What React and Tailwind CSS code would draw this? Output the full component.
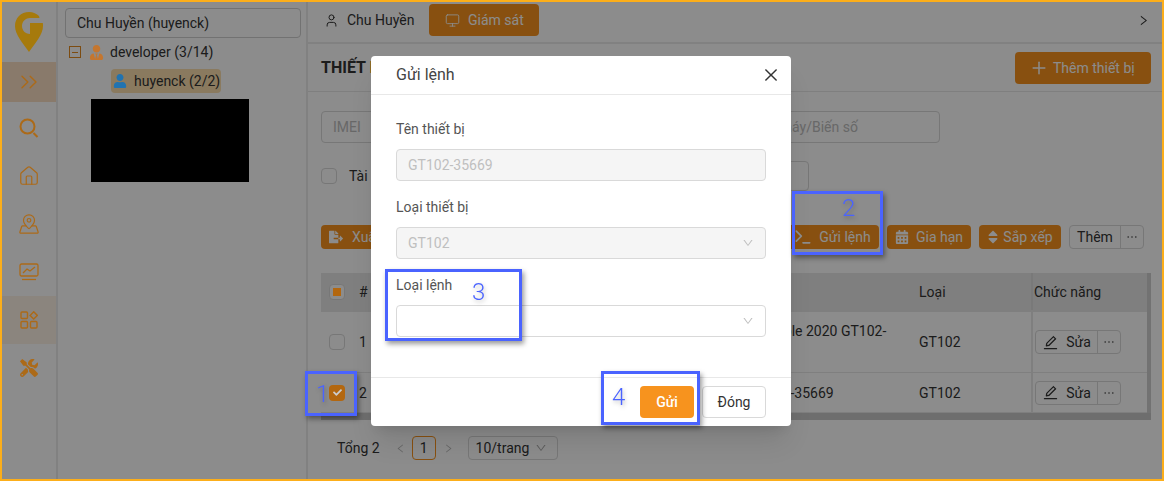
import { ChevronsRight, House, MapPinned, Monitor, Plus, Terminal, User } from "lucide-react";
import { AiOutlineClose, AiOutlineDown, AiOutlineEdit, AiOutlineEllipsis, AiOutlineLeft, AiOutlineRight } from "react-icons/ai";
import { FaCalendarAlt, FaCheck, FaFileExport, FaSort, FaTools, FaUser, FaUserTie } from "react-icons/fa";

function Logo() {
    return (
        <svg width="28" height="40" viewBox="0 0 28 40" className="relative z-20">
            <path d="M14 0C6 0 0 6 0 14c0 9 8 17 14 26 6-9 14-17 14-26 0-1 0-2-.2-3H15v11c-4 0-8-3-8-8s4-8 8-8h9.5L24 4C22 2 18 0 14 0z" fill="#a67a0c" />
        </svg>
    );
}

function SearchIcon() {
    return (
        <svg width="20" height="20" viewBox="0 0 20 20" fill="none" stroke="currentColor">
            <circle cx="8.5" cy="8.5" r="7" strokeWidth="2" />
            <path d="M14.5 15l4 4" strokeWidth="2" />
        </svg>
    );
}

function ChartIcon() {
    return (
        <svg width="20" height="18" viewBox="0 0 20 18" fill="none" stroke="currentColor" strokeWidth="1.3">
            <rect x="1" y="1" width="18" height="12" rx="1.5" />
            <path d="M4 10l4-4 3 2 5-4" />
            <path d="M3 16.5h14" />
        </svg>
    );
}

function AppsIcon() {
    return (
        <svg width="18" height="18" viewBox="0 0 18 18" fill="none" stroke="currentColor" strokeWidth="1.4">
            <rect x="1" y="1" width="6.5" height="6.5" rx="1" />
            <rect x="1" y="10.5" width="6.5" height="6.5" rx="1" />
            <rect x="10.5" y="10.5" width="6.5" height="6.5" rx="1" />
            <path d="M13.7.8l3.6 3.6-3.6 3.6-3.6-3.6z" />
        </svg>
    );
}

function SideItem({ children, className = "" }) {
    return (
        <div className={`h-12 flex items-center justify-center ${className}`}>
            <span className="relative z-20 text-[#ac6a18]">{children}</span>
        </div>
    );
}

function Sidebar() {
    return (
        <aside className="w-[56px] shrink-0 flex flex-col border-r-2 border-[#ececec]">
            <div className="h-[60px] flex items-start justify-center pt-[10px]">
                <Logo />
            </div>
            <SideItem className="bg-[#f9dfc4] !h-[40px]"><ChevronsRight size={28} strokeWidth={1.2} /></SideItem>
            <SideItem className="mt-[2px]"><SearchIcon /></SideItem>
            <SideItem><House size={22} strokeWidth={1.3} /></SideItem>
            <SideItem><MapPinned size={22} strokeWidth={1.3} /></SideItem>
            <SideItem><ChartIcon /></SideItem>
            <SideItem className="bg-[#fdf3e6]"><AppsIcon /></SideItem>
            <SideItem><FaTools size={18} /></SideItem>
        </aside>
    );
}

function TreePanel() {
    return (
        <section className="w-[250px] shrink-0 border-r-2 border-[#ececec] pl-[6px] pt-[6px] text-sm text-[#333]">
            <div className="h-[30px] w-[236px] ml-[1px] border border-[#cfcfcf] rounded-sm pl-[11px] flex items-center">Chu Huyền (huyenck)</div>
            <div className="flex items-center h-[24px] mt-[2px] ml-[5px]">
                <span className="w-[12px] h-[12px] shrink-0 border border-[#e48a1f] flex items-center justify-center mr-[8px]">
                    <span className="w-[6px] h-px bg-[#e48a1f]" />
                </span>
                <FaUserTie size={15} className="relative z-20 text-[#c4762f] mr-[6px]" />
                <span>developer (3/14)</span>
            </div>
            <div className="mt-[5px] ml-[47px] w-[110px] h-[24px] rounded-sm bg-[#fbdfae] flex items-center pl-[2px]">
                <FaUser size={14} className="relative z-20 text-[#2173b0] mr-[7px]" />
                <span>huyenck (2/2)</span>
            </div>
            <div className="mt-[6px] ml-[27px] w-[158px] h-[83px] bg-black" />
        </section>
    );
}

function OrangeBtn({ icon, label, className = "" }) {
    return (
        <div className={`h-[24px] bg-[#f7931e] rounded-sm text-white flex items-center justify-center text-sm ${className}`}>
            {icon}
            <span>{label}</span>
        </div>
    );
}

function RowActions() {
    return (
        <div className="flex h-[24px] w-[86px] border border-[#d9d9d9] rounded-sm text-sm bg-white">
            <div className="w-[62px] border-r border-[#d9d9d9] flex items-center justify-center gap-[7px]">
                <AiOutlineEdit size={17} />
                <span>Sửa</span>
            </div>
            <div className="flex-1 flex items-center justify-center"><AiOutlineEllipsis size={14} /></div>
        </div>
    );
}

function TableRow({ num, name, checked, height }) {
    return (
        <div className={`flex border-b border-[#e8e8e8] text-sm text-[#333] ${height}`}>
            <div className="w-[31px] flex items-center pl-[8px]">
                {checked ? (
                    <span className="relative z-20 w-[16px] h-[16px] rounded-sm bg-[#b3670f] text-[#ccc] flex items-center justify-center"><FaCheck size={9} /></span>
                ) : (
                    <span className="w-[16px] h-[16px] rounded-sm border border-[#d9d9d9] bg-white" />
                )}
            </div>
            <div className="w-[8px] pl-[7px] flex items-center">{num}</div>
            <div className="w-[389px]" />
            <div className="w-[170px] flex items-center">
                <span className="w-[145px] leading-[22px]">{name}</span>
            </div>
            <div className="w-[112px] flex items-center">GT102</div>
            <div className="flex-1 flex items-center pl-[2px] border-l-2 border-[#e8e8e8]">
                <RowActions />
            </div>
        </div>
    );
}

function MainPanel() {
    return (
        <main className="flex-1 min-w-0 flex flex-col text-[#333]">
            <div className="h-[42px] border-b-2 border-[#ececec] flex items-center pl-[16px] pb-[5px] pt-[1px] text-sm">
                <User size={15} strokeWidth={1.6} className="mr-[8px]" />
                <span>Chu Huyền</span>
                <div className="ml-[15px] w-[110px] h-[32px] bg-[#f7931e] rounded-sm text-white flex items-center justify-center gap-[8px]">
                    <Monitor size={15} strokeWidth={1.4} />
                    <span>Giám sát</span>
                </div>
                <AiOutlineRight size={13} className="ml-auto mr-[12px]" />
            </div>
            <div className="h-[48px] border-b border-[#e8e8e8] flex items-center justify-between pl-[13px] pr-[11px]">
                <span className="font-bold text-base">THIẾT <span className="text-[#f7931e]">BỊ</span></span>
                <div className="w-[136px] h-[32px] bg-[#f7931e] rounded-sm text-white text-sm flex items-center pl-[14px] gap-[4px]">
                    <Plus size={20} strokeWidth={1.8} />
                    <span>Thêm thiết bị</span>
                </div>
            </div>
            <div className="pl-[13px] pr-[11px] pt-[19px]">
                <div className="flex gap-[9px]">
                    <div className="w-[300px] h-[32px] border border-[#d9d9d9] rounded-sm px-[11px] flex items-center text-sm text-[#bdbdbd]">IMEI</div>
                    <div className="w-[310px] h-[32px] border border-[#d9d9d9] rounded-sm pl-[129px] flex items-center text-sm text-[#bdbdbd]">Số máy/Biến số</div>
                </div>
                <div className="flex items-center h-[32px] mt-[17px]">
                    <span className="w-[16px] h-[16px] border border-[#d9d9d9] rounded-sm mr-[12px]" />
                    <span className="text-sm">Tài khoản</span>
                    <div className="ml-auto mr-[342px] w-[30px] h-[30px] border border-[#d9d9d9] rounded-sm" />
                </div>
                <div className="flex items-center gap-[8px] mt-[33px]">
                    <OrangeBtn className="w-[90px] !justify-start pl-[8px] gap-[9px]" icon={<FaFileExport size={14} />} label="Xuất" />
                    <div className="flex-1" />
                    <OrangeBtn className="w-[94px] gap-[6px]" icon={<Terminal size={20} strokeWidth={2} />} label="Gửi lệnh" />
                    <OrangeBtn className="w-[84px] gap-[7px]" icon={<FaCalendarAlt size={14} />} label="Gia hạn" />
                    <OrangeBtn className="w-[82px] gap-[2px] pr-[2px]" icon={<FaSort size={16} />} label="Sắp xếp" />
                    <div className="flex h-[24px] w-[75px] border border-[#d9d9d9] rounded-sm text-sm mr-[7px]">
                        <div className="w-[51px] border-r border-[#d9d9d9] flex items-center justify-center">Thêm</div>
                        <div className="flex-1 flex items-center justify-center"><AiOutlineEllipsis size={14} /></div>
                    </div>
                </div>
                <div className="mt-[24px] relative">
                    <div className="flex h-[39px] bg-[#e8e8e8] text-sm items-center pb-[2px]">
                        <div className="w-[31px] pl-[8px]">
                            <span className="w-[16px] h-[16px] bg-white border border-[#d9d9d9] rounded-sm flex items-center justify-center">
                                <span className="relative z-20 w-[8px] h-[8px] bg-[#b3670f]" />
                            </span>
                        </div>
                        <div className="w-[8px] pl-[7px]">#</div>
                        <div className="w-[559px]" />
                        <div className="w-[112px]">Loại</div>
                        <div className="flex-1 h-full flex items-center pl-[1px] border-l-2 border-[#dcdcdc]">Chức năng</div>
                    </div>
                    <TableRow num="1" name="Example 2020 GT102-35669" height="h-[61px]" />
                    <TableRow num="2" name="GT102-35669" checked height="h-[40px]" />
                    <div className="h-[7px] bg-[#c8c8c8]" />
                    <div className="absolute right-0 top-0 bottom-[7px] w-[4px] bg-[#d0d0d0]" />
                </div>
                <div className="flex items-center text-sm h-[24px] mt-[16px] pl-[16px]">
                    <span>Tổng 2</span>
                    <AiOutlineLeft size={11} className="ml-[15px] text-[#bbb]" />
                    <span className="ml-[6px] w-[24px] h-[24px] border border-[#f7931e] rounded-sm flex items-center justify-center">1</span>
                    <AiOutlineRight size={11} className="ml-[7px] text-[#bbb]" />
                    <div className="ml-[14px] w-[90px] h-[24px] border border-[#d9d9d9] rounded-sm flex items-center pl-[7px] gap-[6px]">
                        <span>10/trang</span>
                        <AiOutlineDown size={12} className="text-[#aaa]" />
                    </div>
                </div>
            </div>
        </main>
    );
}

function Field({ label, value, disabled, select, className = "" }) {
    return (
        <div className={className}>
            <div className="text-sm text-[#555] h-[20px] leading-[20px]">{label}</div>
            <div className={`mt-[10px] h-[32px] border border-[#d9d9d9] rounded-sm flex items-center justify-between px-[11px] text-sm text-[#bfbfbf] ${disabled ? "bg-[#f5f5f5]" : "bg-white"}`}>
                <span>{value}</span>
                {select && <AiOutlineDown size={12} className="text-[#bfbfbf]" />}
            </div>
        </div>
    );
}

function Modal() {
    return (
        <div className="absolute left-[369px] top-[54px] w-[420px] h-[370px] bg-white rounded-sm shadow-xl z-30 flex flex-col text-[#333]">
            <div className="h-[39px] border-b border-[#e8e8e8] flex items-center justify-between pl-[25px] pr-[11px]">
                <span className="text-base text-[#444]">Gửi lệnh</span>
                <AiOutlineClose size={18} className="text-[#333]" />
            </div>
            <div className="flex-1 px-[25px] pt-[24px]">
                <Field label="Tên thiết bị" value="GT102-35669" disabled />
                <Field className="mt-[16px]" label="Loại thiết bị" value="GT102" disabled select />
                <Field className="mt-[16px]" label="Loại lệnh" select />
            </div>
            <div className="h-[49px] border-t border-[#e8e8e8] flex items-center justify-end gap-[8px] pr-[25px]">
                <div className="w-[54px] h-[32px] bg-[#f7931e] rounded-sm text-white text-sm font-medium flex items-center justify-center">Gửi</div>
                <div className="w-[64px] h-[32px] border border-[#d9d9d9] rounded-sm text-sm flex items-center justify-center">Đóng</div>
            </div>
        </div>
    );
}

// the numbered blue marks painted over the screenshot
const marks = [
    { n: "1", box: "left-[303px] top-[369px] w-[52px] h-[45px]", num: "left-[8px] top-[8px]" },
    { n: "2", box: "left-[790px] top-[189px] w-[91px] h-[64px]", num: "left-[47px] top-[2px]" },
    { n: "3", box: "left-[383px] top-[267px] w-[137px] h-[72px]", num: "left-[84px] top-[8px]" },
    { n: "4", box: "left-[599px] top-[369px] w-[99px] h-[54px]", num: "left-[8px] top-[11px]" },
];

export default function App() {
    return (
        <div className="relative w-[1164px] h-[481px] border-2 border-[#fcae1a] overflow-hidden bg-white flex font-['Roboto',sans-serif]">
            <Sidebar />
            <TreePanel />
            <MainPanel />
            <div className="absolute inset-0 bg-black/45 z-10" />
            <Modal />
            {marks.map((m) => (
                <div key={m.n} className={`absolute z-40 border-[3px] border-[#4a63ff] shadow-[2px_3px_5px_rgba(0,0,0,0.4)] ${m.box}`}>
                    <span className={`absolute text-2xl leading-none font-light text-[#4a63ff] drop-shadow-[1px_2px_2px_rgba(0,0,0,0.25)] ${m.num}`}>{m.n}</span>
                </div>
            ))}
        </div>
    );
}
